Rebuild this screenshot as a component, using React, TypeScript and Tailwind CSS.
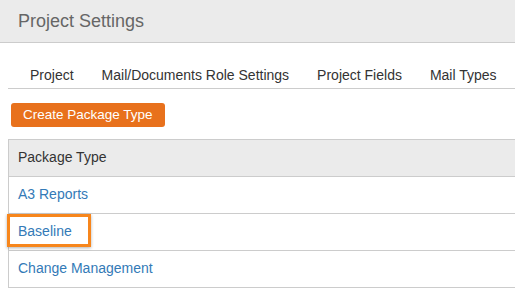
import React from 'react';

const tabs = ['Project', 'Mail/Documents Role Settings', 'Project Fields', 'Mail Types'];
const packageTypes = ['A3 Reports', 'Baseline', 'Change Management'];

export default function App() {
  return (
    <div className="w-[515px] h-[290px] overflow-hidden bg-white font-['Liberation_Sans',Arial,sans-serif]">
      {/* Page header */}
      <div className="h-[43px] bg-[#ebebeb] border-b border-[#cccccc] flex items-center pl-[18px]">
        <h1 className="text-[18px] leading-none text-[#666666]">Project Settings</h1>
      </div>

      {/* Tabs */}
      <div className="ml-[8px] h-[46px] border-b border-[#cccccc] flex items-end pl-[8px] whitespace-nowrap">
        {tabs.map((tab) => (
          <div key={tab} className="px-[14px] pb-[3px] text-[14px] leading-5 text-[#333333]">
            {tab}
          </div>
        ))}
      </div>

      {/* Actions */}
      <div className="pl-[11px] pt-[13px]">
        <button className="h-[24px] px-[12px] rounded-[3px] bg-[#e8711c] text-white text-[13.5px] leading-none">
          Create Package Type
        </button>
      </div>

      {/* Table */}
      <div className="ml-[8px] mt-[12px] w-[520px] border-l border-t border-[#cccccc]">
        <div className="h-[37px] bg-[#ebebeb] border-b border-[#cccccc] flex items-center pl-[9px] text-[14px] text-[#333333]">
          Package Type
        </div>
        {packageTypes.map((name) => (
          <div key={name} className="relative h-[37px] border-b border-[#cccccc] flex items-center pl-[9px] text-[14px] text-[#337ab7]">
            {name}
            {name === 'Baseline' && (
              <div className="absolute -left-[2px] top-0 w-[84px] h-[33px] border-[3px] border-[#f7861c] shadow-[0_1px_3px_rgba(0,0,0,0.3)]" />
            )}
          </div>
        ))}
      </div>
    </div>
  );
}
